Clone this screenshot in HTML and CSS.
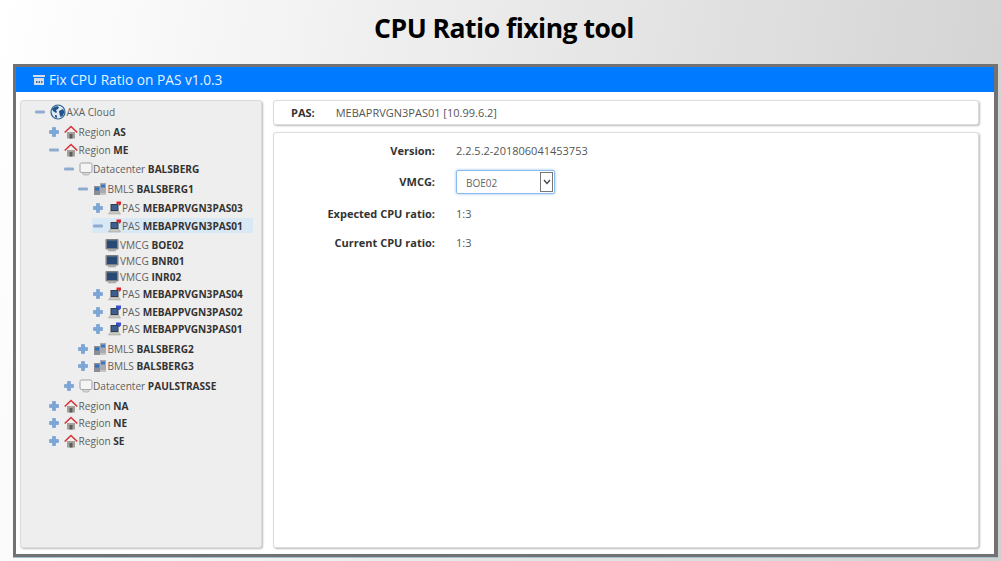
FILE: index.html
```html
<!DOCTYPE html>
<html lang="en">

<head>
    <meta charset="UTF-8">
    <title>CPU Ratio fixing tool</title>
    <link rel="stylesheet" href="styles.css">
</head>

<body>
    <!-- icon set used by the tree -->
    <svg class="defs" width="0" height="0">
        <symbol id="minus" viewBox="0 0 12 12"><rect x="1" y="4.500" width="10" height="3" rx="1.200" fill="#8fabd0"/></symbol>
        <symbol id="plus" viewBox="0 0 12 12"><path d="M4.500 1.500h3v3h3v3h-3v3h-3v-3h-3v-3h3z" fill="#7ba6d8" stroke="#5b8cc4" stroke-width=".5"/></symbol>
        <symbol id="globe" viewBox="0 0 16 16"><circle cx="8" cy="8" r="7" fill="#dfe9f3" stroke="#2f5f93" stroke-width="1.200"/><path d="M4 3.500c2-1.500 4-1.500 5-.5l-1 2-2 1 1 2-1 1-3-2-1-2zM9 7l4-2 1.500 3-2 4-2 1-1-3zM5 11l2 .5 0 2.500-2-1z" fill="#1f5288"/></symbol>
        <symbol id="house" viewBox="0 0 14 14"><path d="M3 7h8v6.500H3z" fill="#a39f9b"/><path d="M5.500 9h3v4.500h-3z" fill="#5c5c5c"/><path d="M.7 7.500 7 1.500l6.300 6" fill="none" stroke="#d8333a" stroke-width="1.600"/></symbol>
        <symbol id="datacenter" viewBox="0 0 14 14"><rect x="1" y="1" width="12" height="9.500" rx="1.500" fill="#f4f4f4" stroke="#a0a0a0"/><path d="M3 10.500h8l-1.500 2.500h-5z" fill="#d6d6d6" stroke="#a0a0a0" stroke-width=".6"/></symbol>
        <symbol id="bmls" viewBox="0 0 14 14"><rect x="7" y="1" width="6" height="10" fill="#a8abb0"/><rect x="1" y="4" width="6" height="9" fill="#8b8e94"/><rect x="2" y="5.500" width="4" height="3" fill="#2f6fc0"/><rect x="8" y="2.500" width="4" height="3" fill="#3a76c4"/><rect x="7" y="11" width="6" height="2" fill="#c4c4c4"/></symbol>
        <symbol id="pas-red" viewBox="0 0 14 14"><rect x="2.500" y="3" width="8" height="7" fill="#333c4a"/><rect x="3.500" y="4" width="6" height="5" fill="#3d5f8f"/><path d="M2 10.500h9l1.500 2.500h-12z" fill="#c9c9c0" stroke="#8a8a8a" stroke-width=".4"/><path d="M8.500 .5h4.500v2.500l-1 1.500h-1v-1.500h-2.500z" fill="#e0202a"/></symbol>
        <symbol id="pas-blue" viewBox="0 0 14 14"><rect x="2.500" y="3" width="8" height="7" fill="#333c4a"/><rect x="3.500" y="4" width="6" height="5" fill="#3d5f8f"/><path d="M2 10.500h9l1.500 2.500h-12z" fill="#c9c9c0" stroke="#8a8a8a" stroke-width=".4"/><path d="M8 .5h5v3l-1.500 1.500h-1.500v-2h-2z" fill="#3a4fd0"/></symbol>
        <symbol id="vmcg" viewBox="0 0 14 14"><rect x=".5" y="1" width="13" height="10.500" rx="1" fill="#7b8186"/><rect x="2" y="2.500" width="10" height="7.500" fill="#2a4a75"/><rect x="3" y="11.500" width="8" height="1.800" fill="#a8a8a8"/></symbol>
    </svg>

    <h1 class="page-title">CPU Ratio fixing tool</h1>

    <div class="window">
        <div class="titlebar">
            <svg class="title-icon" viewBox="0 0 12 10"><rect x="0" y="0" width="12" height="2" fill="#d5dde8"/><rect x="1" y="3" width="10" height="7" fill="#d5dde8"/><rect x="3" y="6" width="1.500" height="2" fill="#4b6f9f"/><rect x="5.500" y="6" width="1.500" height="2" fill="#4b6f9f"/><rect x="8" y="6" width="1.500" height="2" fill="#4b6f9f"/></svg>
            Fix CPU Ratio on PAS v1.0.3
        </div>
        <div class="content">
            <div class="tree-panel">
                <ul class="tree root">
                    <li>
                        <div class="node"><svg class="tog"><use href="#minus"/></svg><svg class="ico globe"><use href="#globe"/></svg>AXA Cloud</div>
                        <ul class="tree">
                            <li><div class="node"><svg class="tog"><use href="#plus"/></svg><svg class="ico"><use href="#house"/></svg>Region <b>AS</b></div></li>
                            <li>
                                <div class="node"><svg class="tog"><use href="#minus"/></svg><svg class="ico"><use href="#house"/></svg>Region <b>ME</b></div>
                                <ul class="tree datacenters">
                                    <li>
                                        <div class="node"><svg class="tog"><use href="#minus"/></svg><svg class="ico"><use href="#datacenter"/></svg>Datacenter <b>BALSBERG</b></div>
                                        <ul class="tree">
                                            <li>
                                                <div class="node"><svg class="tog"><use href="#minus"/></svg><svg class="ico"><use href="#bmls"/></svg>BMLS <b>BALSBERG1</b></div>
                                                <ul class="tree">
                                                    <li><div class="node"><svg class="tog"><use href="#plus"/></svg><svg class="ico"><use href="#pas-red"/></svg>PAS <b>MEBAPRVGN3PAS03</b></div></li>
                                                    <li>
                                                        <div class="node selected"><svg class="tog"><use href="#minus"/></svg><svg class="ico"><use href="#pas-red"/></svg>PAS <b>MEBAPRVGN3PAS01</b></div>
                                                        <ul class="tree leaves">
                                                            <li><div class="node leaf"><svg class="ico"><use href="#vmcg"/></svg>VMCG <b>BOE02</b></div></li>
                                                            <li><div class="node leaf"><svg class="ico"><use href="#vmcg"/></svg>VMCG <b>BNR01</b></div></li>
                                                            <li><div class="node leaf"><svg class="ico"><use href="#vmcg"/></svg>VMCG <b>INR02</b></div></li>
                                                        </ul>
                                                    </li>
                                                    <li><div class="node"><svg class="tog"><use href="#plus"/></svg><svg class="ico"><use href="#pas-red"/></svg>PAS <b>MEBAPRVGN3PAS04</b></div></li>
                                                    <li><div class="node"><svg class="tog"><use href="#plus"/></svg><svg class="ico"><use href="#pas-blue"/></svg>PAS <b>MEBAPPVGN3PAS02</b></div></li>
                                                    <li><div class="node"><svg class="tog"><use href="#plus"/></svg><svg class="ico"><use href="#pas-blue"/></svg>PAS <b>MEBAPPVGN3PAS01</b></div></li>
                                                </ul>
                                            </li>
                                            <li><div class="node"><svg class="tog"><use href="#plus"/></svg><svg class="ico"><use href="#bmls"/></svg>BMLS <b>BALSBERG2</b></div></li>
                                            <li><div class="node"><svg class="tog"><use href="#plus"/></svg><svg class="ico"><use href="#bmls"/></svg>BMLS <b>BALSBERG3</b></div></li>
                                        </ul>
                                    </li>
                                    <li><div class="node"><svg class="tog"><use href="#plus"/></svg><svg class="ico"><use href="#datacenter"/></svg>Datacenter <b>PAULSTRASSE</b></div></li>
                                </ul>
                            </li>
                            <li><div class="node"><svg class="tog"><use href="#plus"/></svg><svg class="ico"><use href="#house"/></svg>Region <b>NA</b></div></li>
                            <li><div class="node"><svg class="tog"><use href="#plus"/></svg><svg class="ico"><use href="#house"/></svg>Region <b>NE</b></div></li>
                            <li><div class="node"><svg class="tog"><use href="#plus"/></svg><svg class="ico"><use href="#house"/></svg>Region <b>SE</b></div></li>
                        </ul>
                    </li>
                </ul>
            </div>

            <div class="detail">
                <div class="card pas-bar"><b>PAS:</b><span>MEBAPRVGN3PAS01 [10.99.6.2]</span></div>
                <div class="card form">
                    <label>Version:</label>
                    <span>2.2.5.2-201806041453753</span>
                    <label>VMCG:</label>
                    <div class="select-wrap">
                        <select>
                            <option>BOE02</option>
                            <option>BNR01</option>
                            <option>INR02</option>
                        </select>
                        <span class="select-arrow"><svg viewBox="0 0 8 6" width="8" height="6"><path d="M1 1l3 3.500L7 1" fill="none" stroke="#444" stroke-width="1.300"/></svg></span>
                    </div>
                    <label>Expected CPU ratio:</label>
                    <span>1:3</span>
                    <label>Current CPU ratio:</label>
                    <span>1:3</span>
                </div>
            </div>
        </div>
    </div>
</body>

</html>
```

FILE: styles.css
```css
* {
    box-sizing: border-box;
}

body {
    margin: 0;
    height: 561px;
    overflow: hidden;
    background: linear-gradient(100deg, #ffffff 0%, #f6f6f6 20%, #e6e6e6 55%, #d0d0d0 100%);
    font-family: "Open Sans", "Noto Sans", sans-serif;
    color: #555;
}

.defs {
    position: absolute;
}

.page-title {
    margin: 0;
    height: 64px;
    padding: 10px 0 0 7px;
    text-align: center;
    font-size: 26.500px;
    line-height: 36px;
    font-weight: 700;
    color: #000;
    letter-spacing: -0.5px;
}

.window {
    margin-left: 13px;
    width: 985px;
    height: 493px;
    border: 3px solid #727272;
    border-right-width: 4px;
    background: #fff;
    box-shadow: 0 1px 0 #9fc3d0;
    display: flex;
    flex-direction: column;
}

.titlebar {
    height: 25px;
    background: #007bff;
    color: #e8f2ff;
    font-size: 13.700px;
    line-height: 25px;
    padding-left: 17px;
    display: flex;
    align-items: center;
    gap: 4px;
    flex-shrink: 0;
}

.title-icon {
    width: 12px;
    height: 10px;
}

.content {
    flex: 1;
    display: flex;
    gap: 11px;
    padding: 8px 15px 6px 4px;
}

.tree-panel {
    width: 242px;
    background: #eeeeee;
    border: 1px solid #dcdcdc;
    border-radius: 3px;
    box-shadow: 1px 1px 2px #bbb;
    padding: 2px 0 0 13px;
}

.tree {
    list-style: none;
    margin: 2px 0;
    padding: 0 0 0 14.500px;
}

.tree.root {
    margin: 0;
    padding: 0;
}

.root>li>.tree {
    margin-top: 3px;
    padding-left: 14px;
}

.tree.datacenters {
    margin-bottom: 2.500px;
}

.tree.leaves {
    padding-left: 13px;
    margin: 3.500px 0 .5px;
}

.node {
    height: 17.500px;
    display: flex;
    align-items: center;
    font-size: 10.100px;
    white-space: pre;
    color: #5f5f5f;
}

.node b {
    font-weight: 700;
    color: #333;
}

.leaf {
    height: 16px;
}

.leaf .ico {
    margin-right: 1.500px;
}

.selected {
    background: #d9e8f5;
    width: 161px;
    height: 15px;
    margin: 1.250px 0;
}

.tog {
    width: 12px;
    height: 12px;
    margin-right: 4px;
    flex-shrink: 0;
}

.ico {
    width: 14px;
    height: 14px;
    margin-right: .5px;
    flex-shrink: 0;
}

.ico.globe {
    width: 16px;
    height: 16px;
}

.detail {
    flex: 1;
    display: flex;
    flex-direction: column;
    gap: 7px;
}

.card {
    background: #fff;
    border: 1px solid #dcdcdc;
    border-radius: 3px;
    box-shadow: 1px 1px 2px #bbb;
    font-size: 11px;
}

.pas-bar {
    height: 25px;
    display: flex;
    align-items: center;
    padding-left: 17px;
    gap: 21px;
    color: #555;
}

.pas-bar b,
.form label {
    color: #333;
    font-weight: 700;
}

.form {
    flex: 1;
    display: grid;
    grid-template-columns: 161px 1fr;
    grid-auto-rows: min-content;
    gap: 9.500px 21px;
    align-items: center;
    padding-top: 7.500px;
}

.form label {
    text-align: right;
}

.form>span,
.form>label {
    line-height: 20px;
}

.select-wrap {
    position: relative;
    width: 99px;
    height: 24px;
}

.select-wrap select {
    appearance: none;
    width: 100%;
    height: 100%;
    padding: 2px 0 0 9px;
    border: 1px solid #8ebcf0;
    border-radius: 2px;
    box-shadow: 0 0 3px #8ebcf0;
    background: #fff;
    color: #666;
    font-family: inherit;
    font-size: 10px;
    outline: none;
}

.select-arrow {
    position: absolute;
    top: 2px;
    right: 2px;
    width: 13px;
    height: 20px;
    border: 1px solid #777;
    background: #fff;
    display: flex;
    align-items: center;
    justify-content: center;
}
```
